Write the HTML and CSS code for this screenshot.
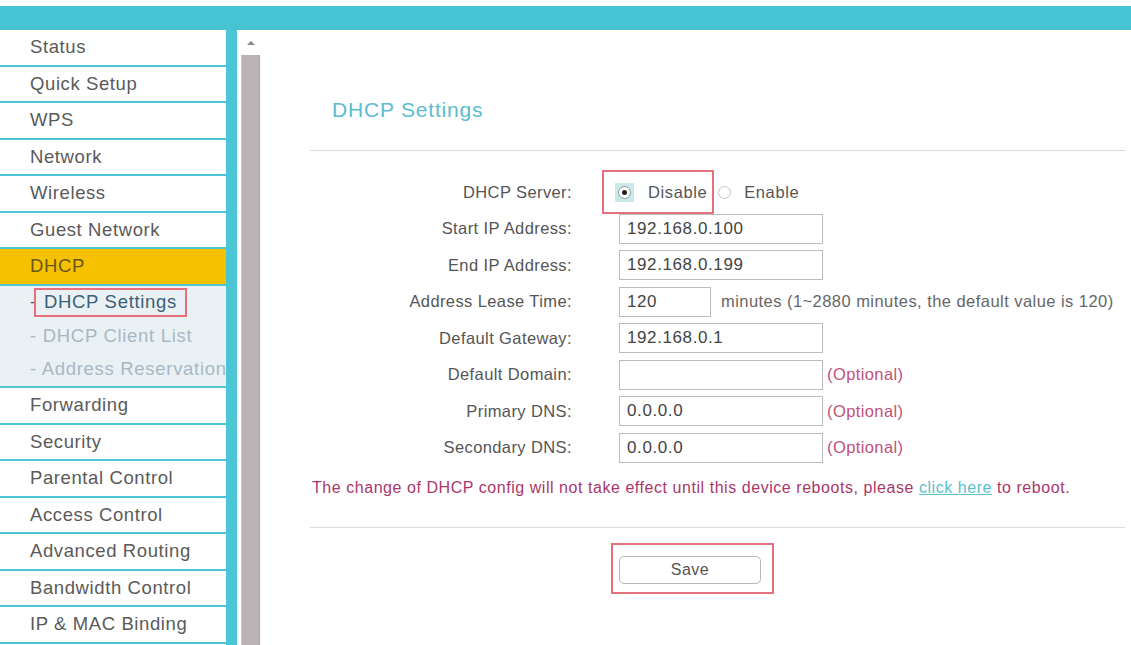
FILE: index.html
```html
<!DOCTYPE html>
<html lang="en">
<head>
  <meta charset="UTF-8">
  <title>DHCP Settings</title>
  <link rel="stylesheet" href="styles.css">
</head>
<body>
  <div class="topbar"></div>

  <div class="main">
    <!-- Menú lateral -->
    <ul class="sidebar">
      <li class="menu-item">Status</li>
      <li class="menu-item">Quick Setup</li>
      <li class="menu-item">WPS</li>
      <li class="menu-item">Network</li>
      <li class="menu-item">Wireless</li>
      <li class="menu-item">Guest Network</li>
      <li class="menu-item active">DHCP</li>
      <li class="submenu">
        <div class="sub-item current">- <span class="mark">DHCP Settings</span></div>
        <div class="sub-item">- DHCP Client List</div>
        <div class="sub-item">- Address Reservation</div>
      </li>
      <li class="menu-item">Forwarding</li>
      <li class="menu-item">Security</li>
      <li class="menu-item">Parental Control</li>
      <li class="menu-item">Access Control</li>
      <li class="menu-item">Advanced Routing</li>
      <li class="menu-item">Bandwidth Control</li>
      <li class="menu-item">IP &amp; MAC Binding</li>
    </ul>

    <div class="scrollbar">
      <div class="scroll-arrow"></div>
      <div class="scroll-thumb"></div>
    </div>

    <!-- Contenido -->
    <div class="content">
      <h1 class="title">DHCP Settings</h1>
      <hr class="line">

      <div class="form">
        <label class="label">DHCP Server:</label>
        <div class="field">
          <span class="mark radio-group">
            <span class="focus"><span class="radio checked"></span></span>
            <span class="radio-text">Disable</span>
          </span>
          <span class="radio"></span>
          <span class="radio-text">Enable</span>
        </div>

        <label class="label">Start IP Address:</label>
        <div class="field"><input class="input" type="text" value="192.168.0.100"></div>

        <label class="label">End IP Address:</label>
        <div class="field"><input class="input" type="text" value="192.168.0.199"></div>

        <label class="label">Address Lease Time:</label>
        <div class="field">
          <input class="input short" type="text" value="120">
          <span class="hint">minutes (1~2880 minutes, the default value is 120)</span>
        </div>

        <label class="label">Default Gateway:</label>
        <div class="field"><input class="input" type="text" value="192.168.0.1"></div>

        <label class="label">Default Domain:</label>
        <div class="field">
          <input class="input" type="text" value="">
          <span class="optional">(Optional)</span>
        </div>

        <label class="label">Primary DNS:</label>
        <div class="field">
          <input class="input" type="text" value="0.0.0.0">
          <span class="optional">(Optional)</span>
        </div>

        <label class="label">Secondary DNS:</label>
        <div class="field">
          <input class="input" type="text" value="0.0.0.0">
          <span class="optional">(Optional)</span>
        </div>
      </div>

      <p class="note">The change of DHCP config will not take effect until this device reboots, please <a href="#">click here</a> to reboot.</p>
      <hr class="line">

      <div class="actions">
        <div class="mark save-mark"><button class="save">Save</button></div>
      </div>
    </div>
  </div>
</body>
</html>
```

FILE: styles.css
```css
body {
  margin: 0;
  padding: 0;
  height: 645px;
  overflow: hidden;
  background: white;
  font-family: 'Liberation Sans', Arial, sans-serif;
  color: #555;
  display: flex;
  flex-direction: column;
}

.topbar {
  margin-top: 6px;
  height: 24px;
  background-color: #46c4d3;
  flex-shrink: 0;
}

.main {
  flex: 1;
  display: flex;
  overflow: hidden;
}

/* Menú lateral */
.sidebar {
  list-style: none;
  margin: 0;
  padding: 0;
  width: 226px;
  flex-shrink: 0;
  border-right: 11px solid #4cc6d4;
  background: white;
}

.menu-item {
  height: 34.5px;
  border-bottom: 2px solid #4cc6d4;
  display: flex;
  align-items: center;
  padding-left: 30px;
  font-size: 18.5px;
  letter-spacing: 0.6px;
  color: #5a5a5a;
  white-space: nowrap;
}

.menu-item.active {
  background-color: #f6c200;
  color: #6a5620;
}

.submenu {
  background-color: #e9f1f5;
  border-bottom: 2px solid #4cc6d4;
  overflow: hidden;
}

.sub-item {
  height: 33.5px;
  display: flex;
  align-items: center;
  padding-left: 30px;
  font-size: 18.5px;
  letter-spacing: 0.7px;
  color: #a8b8c3;
  white-space: nowrap;
}

.sub-item.current {
  color: #3c5f7a;
}

.sub-item.current .mark {
  margin-left: -3px;
  padding: 1px 8px 2px 8px;
}

/* Recuadros rojos */
.mark {
  display: inline-block;
  border: 2px solid #e56f7b;
}

/* Barra de desplazamiento */
.scrollbar {
  width: 19px;
  margin-left: 4px;
  flex-shrink: 0;
  display: flex;
  flex-direction: column;
}

.scroll-arrow {
  height: 25px;
  position: relative;
}

.scroll-arrow::after {
  content: '';
  position: absolute;
  left: 6px;
  top: 11px;
  border-left: 4px solid transparent;
  border-right: 4px solid transparent;
  border-bottom: 4px solid #888;
}

.scroll-thumb {
  flex: 1;
  background-color: #b9b3b5;
  border-left: 1px solid #cfc8cc;
  border-right: 1px solid #a8a4a4;
}

/* Contenido */
.content {
  flex: 1;
  padding: 68px 6px 0 50px;
}

.title {
  margin: 0 0 28px 22px;
  font-size: 21px;
  line-height: 24px;
  font-weight: normal;
  letter-spacing: 0.8px;
  color: #5cbcd0;
}

.line {
  margin: 0;
  border: none;
  border-top: 1px solid #dcdcdc;
}

.form {
  margin-top: 23px;
  display: grid;
  grid-template-columns: 262px auto;
  grid-auto-rows: 36.5px;
  column-gap: 47px;
  align-items: center;
}

.label {
  text-align: right;
  font-size: 16.5px;
  letter-spacing: 0.4px;
  color: #555;
  white-space: nowrap;
}

.field {
  display: flex;
  align-items: center;
  white-space: nowrap;
}

.input {
  width: 204px;
  height: 30px;
  box-sizing: border-box;
  border: 1px solid #bcbcbc;
  padding: 0 0 0 7px;
  margin: 0;
  font-family: 'Liberation Sans', Arial, sans-serif;
  font-size: 17px;
  letter-spacing: 0.6px;
  color: #444;
  background: white;
}

.input.short {
  width: 92px;
}

.hint {
  margin-left: 10px;
  font-size: 16.5px;
  letter-spacing: 0.45px;
  color: #666;
}

.optional {
  margin-left: 4px;
  font-size: 16.5px;
  letter-spacing: 0.4px;
  color: #c1517d;
}

/* Botones de opción */
.radio-group {
  margin-left: -17px;
  height: 44px;
  box-sizing: border-box;
  padding: 0 5px 0 11px;
  display: flex;
  align-items: center;
}

.focus {
  display: inline-flex;
  padding: 3px;
  background-color: #c9e8ec;
}

.radio {
  width: 11px;
  height: 11px;
  border: 1px solid #c4c4c4;
  border-radius: 50%;
  background: white;
  display: inline-flex;
  align-items: center;
  justify-content: center;
  margin-left: 4px;
}

.focus .radio {
  margin-left: 0;
  border-color: #999;
}

.radio.checked::after {
  content: '';
  width: 5px;
  height: 5px;
  border-radius: 50%;
  background-color: #222;
}

.radio-text {
  margin-left: 13px;
  font-size: 16.5px;
  letter-spacing: 0.6px;
  color: #555;
}

.radio-group .radio-text {
  margin-left: 14px;
}

.note {
  margin: 12px 0 29px 2px;
  font-size: 16px;
  line-height: 20px;
  letter-spacing: 0.55px;
  color: #a8386a;
  white-space: nowrap;
}

.note a {
  color: #5cc0cc;
}

.actions {
  padding: 15px 0 0 301px;
}

.save-mark {
  padding: 11px 11px 8px 6px;
}

.save {
  width: 142px;
  height: 28px;
  border: 1px solid #b8b8b8;
  border-radius: 5px;
  background: white;
  font-family: 'Liberation Sans', Arial, sans-serif;
  font-size: 16px;
  letter-spacing: 0.5px;
  color: #555;
  display: block;
}
```
